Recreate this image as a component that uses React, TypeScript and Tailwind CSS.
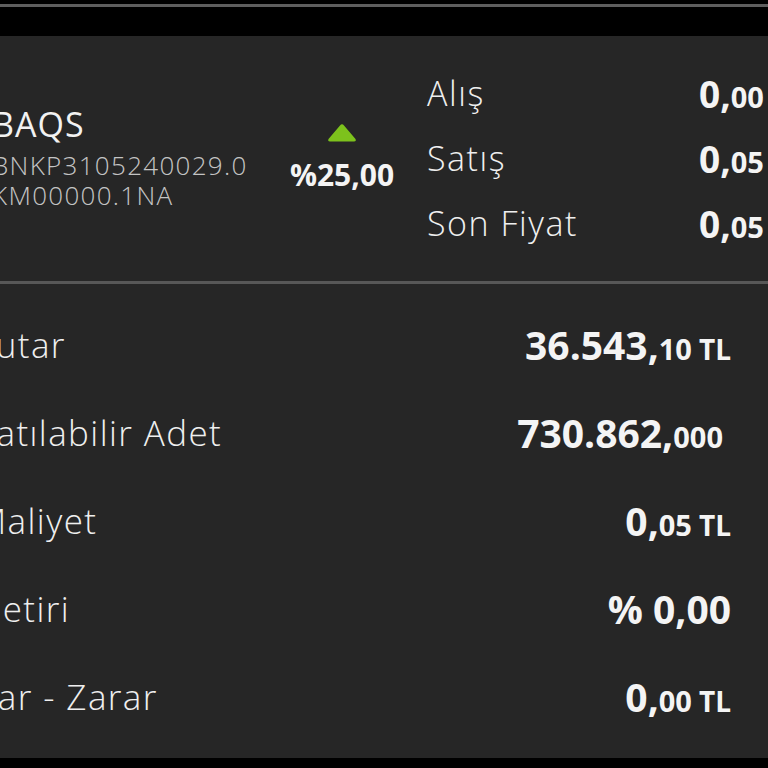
const font = { fontFamily: '"Open Sans", "Noto Sans", sans-serif' };

type Row = { label: string; main: string; frac?: string; unit?: string; shift?: string };

const rows: Row[] = [
  { label: "Tutar", main: "36.543,", frac: "10", unit: "TL" },
  { label: "Satılabilir Adet", main: "730.862,", frac: "000", shift: "mr-[8px]" },
  { label: "Maliyet", main: "0,", frac: "05", unit: "TL" },
  { label: "Getiri", main: "% 0,00" },
  { label: "Kar - Zarar", main: "0,", frac: "00", unit: "TL" },
];

const quotes = [
  { label: "Alış", frac: "00" },
  { label: "Satış", frac: "05" },
  { label: "Son Fiyat", frac: "05" },
];

function SummaryRow({ row }: { row: Row }) {
  return (
    <div className="flex h-[88px] items-center justify-between">
      <span className="-ml-[24px] text-[35px] font-light tracking-[0.04em] text-[#efefef]">{row.label}</span>
      <span className={`flex items-baseline font-bold text-[#f4f4f4] ${row.shift ?? ""}`}>
        <span className="text-[39px]">{row.main}</span>
        {row.frac && <span className="text-[29px]">{row.frac}</span>}
        {row.unit && <span className="ml-[7px] text-[28px]">{row.unit}</span>}
      </span>
    </div>
  );
}

export default function App() {
  return (
    <div className="flex h-[768px] w-full flex-col overflow-hidden bg-black" style={font}>
      {/* status strip */}
      <div className="mt-[4px] h-[3px] bg-[#5e5e5e]" />
      <div className="h-[29px]" />

      <div className="flex h-[722px] flex-col bg-[#262626]">
        {/* instrument header */}
        <div className="flex h-[245px] items-center">
          <div className="-ml-[8px] w-[297px] leading-none">
            <div className="text-[34px] font-normal tracking-[0.03em] text-[#f2f2f2]">BAQS</div>
            <div className="mt-[9px] text-[26px] font-light leading-[30px] tracking-[0.05em] text-[#c4c4c4]">
              <div>BNKP3105240029.0</div>
              <div>KM00000.1NA</div>
            </div>
          </div>

          <div className="flex w-[106px] flex-col items-center">
            <svg width="30" height="19" viewBox="0 0 30 19" className="mb-[18px] -mt-[4px]">
              <path d="M13 2.5 Q15 0 17 2.5 L28.5 16 Q29.5 18.5 27 18.5 L3 18.5 Q0.5 18.5 1.5 16 Z" fill="#7dc21c" />
            </svg>
            <span className="text-[30px] font-bold leading-none text-[#f4f4f4]">%25,00</span>
          </div>

          <div className="ml-[32px] flex flex-col">
            {quotes.map((q) => (
              <div key={q.label} className="flex h-[65px] items-center">
                <span className="w-[272px] text-[34px] font-light tracking-[0.045em] text-[#efefef]">{q.label}</span>
                <span className="flex items-baseline font-bold text-[#f4f4f4]">
                  <span className="text-[37px]">0,</span>
                  <span className="text-[29px]">{q.frac}</span>
                </span>
              </div>
            ))}
          </div>
        </div>

        <div className="h-[3px] bg-[#575757]" />

        {/* position summary */}
        <div className="flex flex-col pr-[37px] pt-[17px]">
          {rows.map((r) => (
            <SummaryRow key={r.label} row={r} />
          ))}
        </div>
      </div>
    </div>
  );
}
